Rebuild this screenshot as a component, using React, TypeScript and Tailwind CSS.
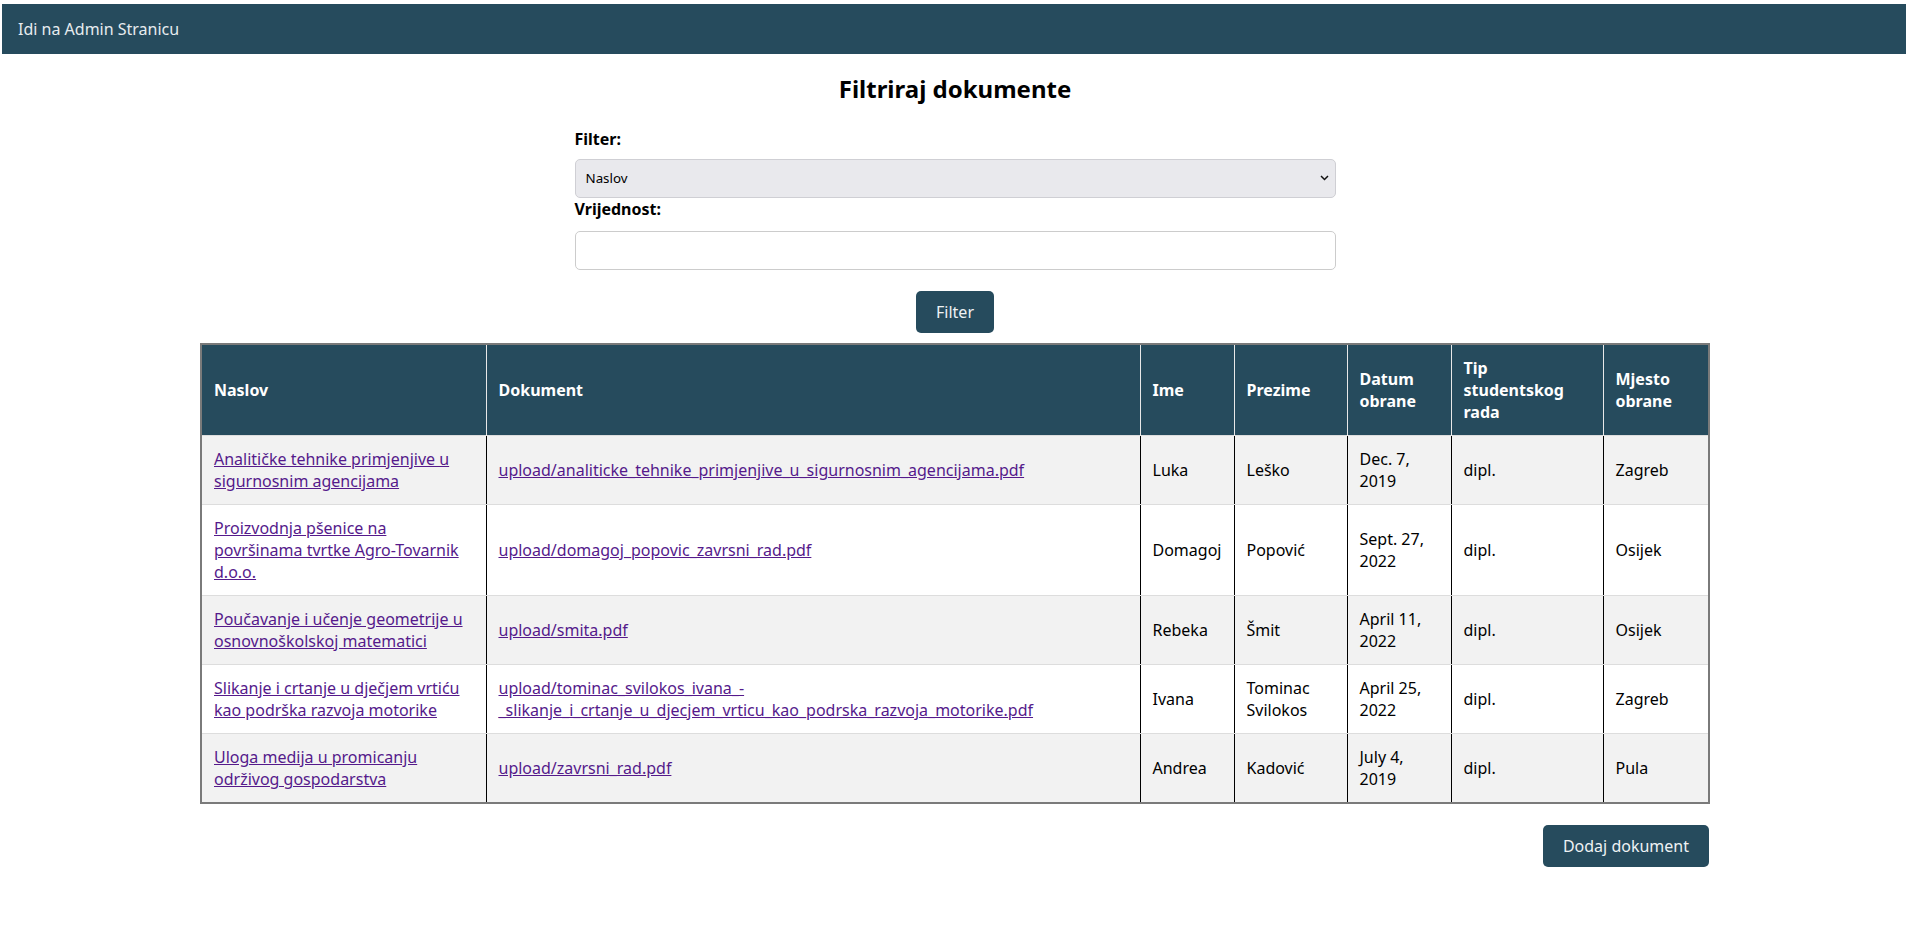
import React from "react";

interface Rad {
  naslov: string;
  dokument: string;
  ime: string;
  prezime: string;
  datum: string;
  tip: string;
  mjesto: string;
}

const radovi: Rad[] = [
  {
    naslov: "Analitičke tehnike primjenjive u sigurnosnim agencijama",
    dokument: "upload/analiticke_tehnike_primjenjive_u_sigurnosnim_agencijama.pdf",
    ime: "Luka",
    prezime: "Leško",
    datum: "Dec. 7, 2019",
    tip: "dipl.",
    mjesto: "Zagreb",
  },
  {
    naslov: "Proizvodnja pšenice na površinama tvrtke Agro-Tovarnik d.o.o.",
    dokument: "upload/domagoj_popovic_zavrsni_rad.pdf",
    ime: "Domagoj",
    prezime: "Popović",
    datum: "Sept. 27, 2022",
    tip: "dipl.",
    mjesto: "Osijek",
  },
  {
    naslov: "Poučavanje i učenje geometrije u osnovnoškolskoj matematici",
    dokument: "upload/smita.pdf",
    ime: "Rebeka",
    prezime: "Šmit",
    datum: "April 11, 2022",
    tip: "dipl.",
    mjesto: "Osijek",
  },
  {
    naslov: "Slikanje i crtanje u dječjem vrtiću kao podrška razvoja motorike",
    dokument:
      "upload/tominac_svilokos_ivana_-_slikanje_i_crtanje_u_djecjem_vrticu_kao_podrska_razvoja_motorike.pdf",
    ime: "Ivana",
    prezime: "Tominac Svilokos",
    datum: "April 25, 2022",
    tip: "dipl.",
    mjesto: "Zagreb",
  },
  {
    naslov: "Uloga medija u promicanju održivog gospodarstva",
    dokument: "upload/zavrsni_rad.pdf",
    ime: "Andrea",
    prezime: "Kadović",
    datum: "July 4, 2019",
    tip: "dipl.",
    mjesto: "Pula",
  },
];

const th =
  "px-3 py-3 text-left align-middle font-bold text-white border-x border-x-[#e8e8e8]";
const td =
  "px-3 py-3 align-middle border-x border-x-black border-y border-y-[#dddddd]";
const link = "text-[#551a8b] underline";

export default function App() {
  return (
    <div className="min-h-screen bg-white font-['Noto_Sans',sans-serif] text-[16px] leading-[1.4] text-black">
      <nav className="mt-[4px] ml-[2px] mr-[4px] h-[50px] bg-[#264b5d] px-4 flex items-center">
        <a href="#" className="text-[#e6ecef]">
          Idi na Admin Stranicu
        </a>
      </nav>

      <h2 className="mt-[18px] text-center text-[24px] font-bold">Filtriraj dokumente</h2>

      <form className="mx-auto mt-[22px] w-[761px]">
        <label className="block font-bold mb-[9px]">Filter:</label>
        <div className="relative">
          <select className="block w-full h-[39px] appearance-none rounded-[5px] border border-[#cfcfd4] bg-[#e9e9ed] pl-[10px] text-[13.33px] text-black">
            <option>Naslov</option>
            <option>Dokument</option>
            <option>Ime</option>
            <option>Prezime</option>
          </select>
          <svg
            className="pointer-events-none absolute right-[7px] top-[16px]"
            width="9"
            height="6"
            viewBox="0 0 9 6"
          >
            <path d="M1 1l3.5 3.5L8 1" fill="none" stroke="#111" strokeWidth="1.5" />
          </svg>
        </div>
        <label className="block font-bold mb-[11px]">Vrijednost:</label>
        <input
          type="text"
          className="block w-full h-[39px] rounded-[5px] border border-[#cccccc] bg-white px-2"
        />
        <div className="flex justify-center mt-[21px]">
          <button
            type="button"
            className="h-[42px] rounded-[5px] bg-[#264b5d] px-5 text-[#eef2f4]"
          >
            Filter
          </button>
        </div>
      </form>

      <table className="mx-auto mt-[10px] w-[1508px] table-fixed border-collapse border-2 border-[#7a7a7a] leading-[normal]">
        <colgroup>
          <col className="w-[285px]" />
          <col className="w-[654px]" />
          <col className="w-[94px]" />
          <col className="w-[113px]" />
          <col className="w-[104px]" />
          <col className="w-[152px]" />
          <col className="w-[106px]" />
        </colgroup>
        <thead className="bg-[#264b5d]">
          <tr>
            <th className={th}>Naslov</th>
            <th className={th}>Dokument</th>
            <th className={th}>Ime</th>
            <th className={th}>Prezime</th>
            <th className={th}>Datum obrane</th>
            <th className={th}>Tip studentskog rada</th>
            <th className={th}>Mjesto obrane</th>
          </tr>
        </thead>
        <tbody>
          {radovi.map((r, i) => (
            <tr key={i} className={i % 2 === 0 ? "bg-[#f2f2f2]" : "bg-white"}>
              <td className={td}>
                <a href="#" className={link}>
                  {r.naslov}
                </a>
              </td>
              <td className={td + " break-words"}>
                <a href="#" className={link}>
                  {r.dokument}
                </a>
              </td>
              <td className={td}>{r.ime}</td>
              <td className={td}>{r.prezime}</td>
              <td className={td}>{r.datum}</td>
              <td className={td}>{r.tip}</td>
              <td className={td}>{r.mjesto}</td>
            </tr>
          ))}
        </tbody>
      </table>

      <div className="mx-auto mt-[21px] w-[1508px] flex justify-end">
        <button
          type="button"
          className="h-[42px] rounded-[5px] bg-[#264b5d] px-5 text-[#eef2f4]"
        >
          Dodaj dokument
        </button>
      </div>
    </div>
  );
}
